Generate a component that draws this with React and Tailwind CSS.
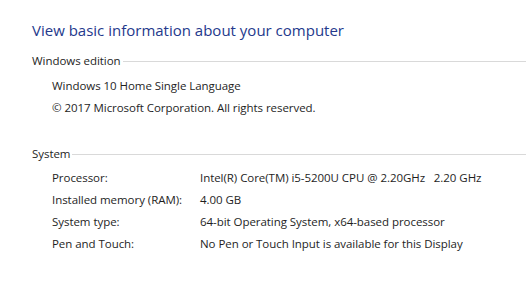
import React from "react";

const edition = [
  "Windows 10 Home Single Language",
  "© 2017 Microsoft Corporation. All rights reserved.",
];

const system = [
  ["Processor:", "Intel(R) Core(TM) i5-5200U CPU @ 2.20GHz   2.20 GHz"],
  ["Installed memory (RAM):", "4.00 GB"],
  ["System type:", "64-bit Operating System, x64-based processor"],
  ["Pen and Touch:", "No Pen or Touch Input is available for this Display"],
];

const SectionHeading = ({ title, className }) => (
  <div className={`flex h-[22px] items-center ${className}`}>
    <span>{title}</span>
    <div className="ml-[2px] h-px flex-1 bg-[#d9d9d9]" />
  </div>
);

export default function App() {
  return (
    <div
      className="h-[297px] w-[526px] overflow-hidden bg-white pl-[32px] pt-[20px] text-[11.5px] tracking-[-0.05px] text-[#1e1e1e]"
      style={{ fontFamily: '"Open Sans", "Noto Sans", sans-serif' }}
    >
      <h1 className="h-[20px] text-[15px] leading-[20px] tracking-normal text-[#24398c]">
        View basic information about your computer
      </h1>

      <SectionHeading title="Windows edition" className="mt-[10px]" />
      <div className="mt-[3px] pl-[20px]">
        {edition.map((line) => (
          <div key={line} className="flex h-[22px] items-center">
            {line}
          </div>
        ))}
      </div>

      <SectionHeading title="System" className="mt-[24px]" />
      <div className="mt-[2px] pl-[20px]">
        {system.map(([label, value]) => (
          <div key={label} className="flex h-[22px] items-center">
            <span className="w-[148px] shrink-0">{label}</span>
            <span className="whitespace-pre">{value}</span>
          </div>
        ))}
      </div>
    </div>
  );
}
